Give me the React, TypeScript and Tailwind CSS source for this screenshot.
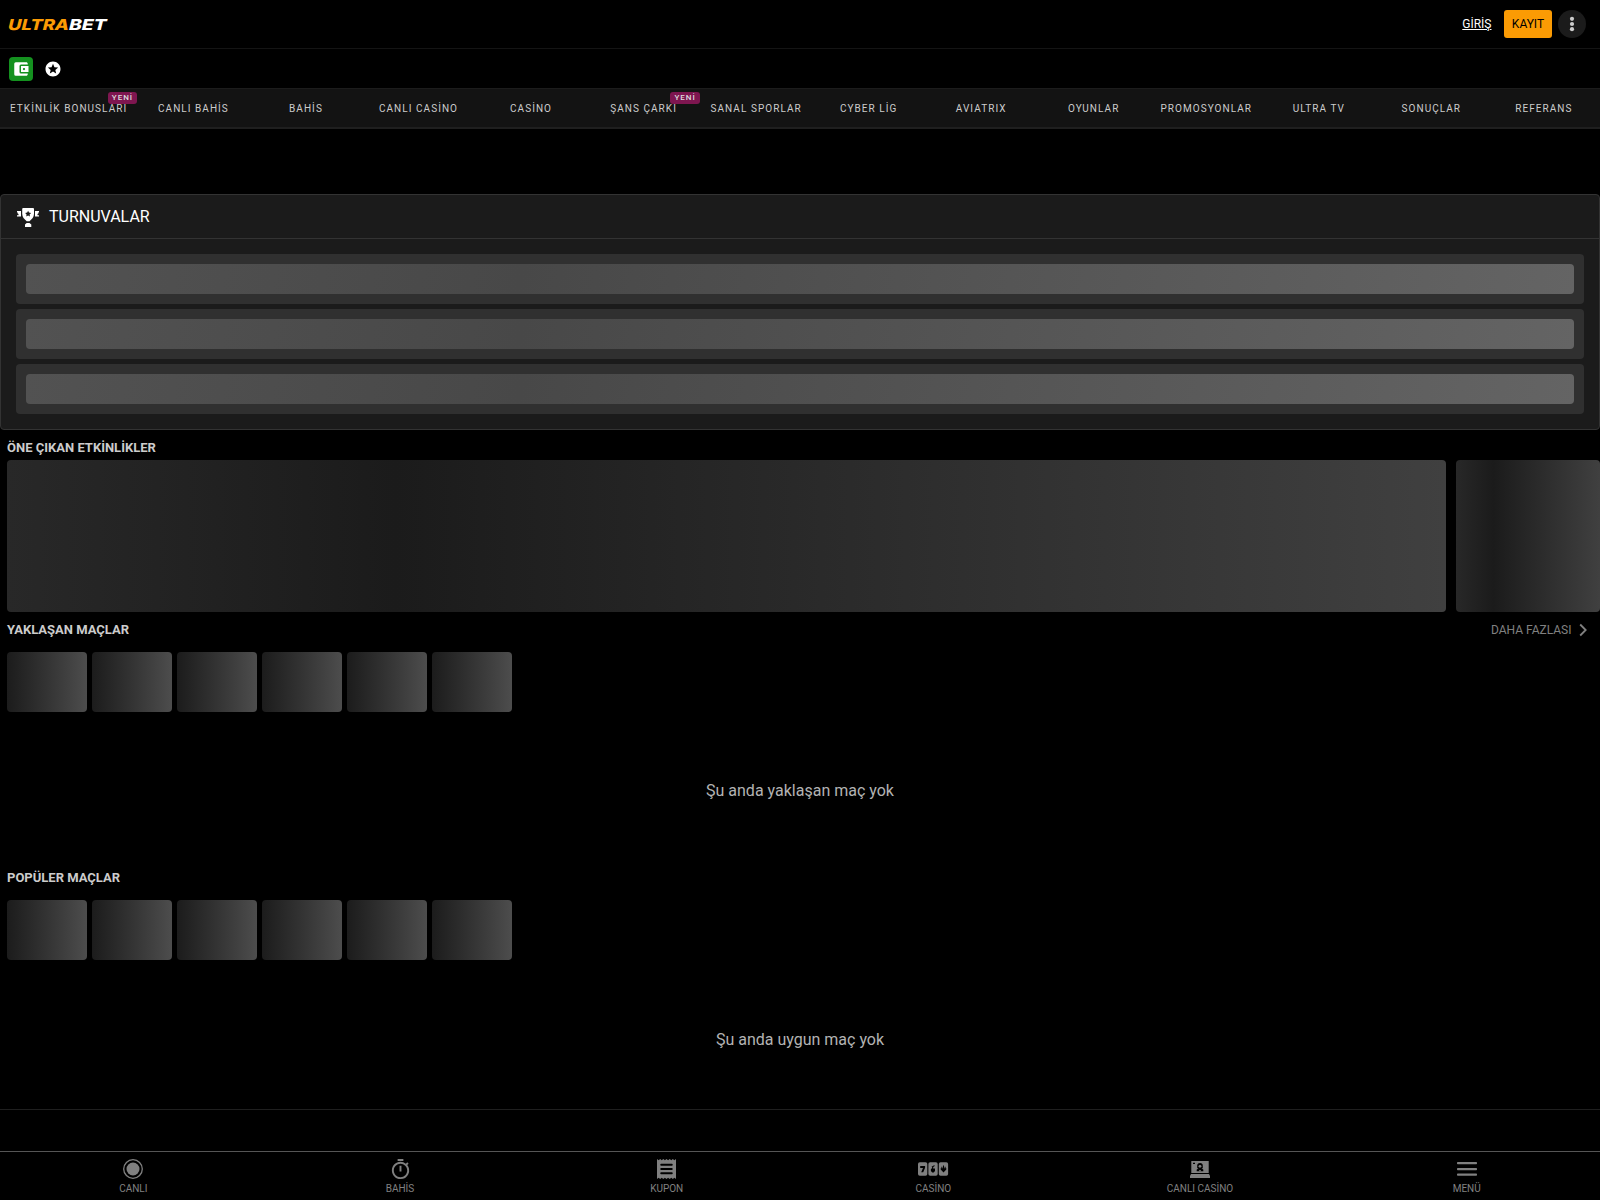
import React from 'react';
import { MdStars, MdOutlineTimer, MdAccountBalanceWallet } from 'react-icons/md';

interface NavItem {
  label: string;
  isNew?: boolean;
}

const navItems: NavItem[] = [
  { label: 'ETKİNLİK BONUSLARI', isNew: true },
  { label: 'CANLI BAHİS' },
  { label: 'BAHİS' },
  { label: 'CANLI CASİNO' },
  { label: 'CASİNO' },
  { label: 'ŞANS ÇARKI', isNew: true },
  { label: 'SANAL SPORLAR' },
  { label: 'CYBER LİG' },
  { label: 'AVIATRIX' },
  { label: 'OYUNLAR' },
  { label: 'PROMOSYONLAR' },
  { label: 'ULTRA TV' },
  { label: 'SONUÇLAR' },
  { label: 'REFERANS' },
];

const Logo: React.FC = () => (
  <svg width="104" height="20" viewBox="-2 -2 104 20" className="-ml-0.5" fontFamily="Inter, sans-serif" fontWeight="800" fontSize="15" aria-label="Ultrabet">
    <g transform="translate(-1 13.500) skewX(-14)">
      <text x="0" y="0" fill="#fb9b04" textLength="61" lengthAdjust="spacingAndGlyphs">ULTRA</text>
      <text x="61" y="0" fill="#fff" textLength="37.500" lengthAdjust="spacingAndGlyphs">BET</text>
    </g>
  </svg>
);

const DotsIcon: React.FC = () => (
  <svg width="6" height="16" viewBox="0 0 6 16" fill="currentColor">
    <circle cx="3" cy="2.8" r="2.1" />
    <circle cx="3" cy="8" r="2.1" />
    <circle cx="3" cy="13.2" r="2.1" />
  </svg>
);

const TrophyIcon: React.FC = () => (
  <svg width="22" height="20" viewBox="0 0 22 20" fill="#fff">
    <path d="M5.200 1.600 6.200 1h9.800l1 .6v5c0 3.600-2 5.600-4.500 7.600h-2.800C7.200 12.200 5.200 10.200 5.200 6.600z" />
    <path d="M0 4h4v5.500H0V8.200h1.500V7L.5 6.300V5.200H0zM22 4h-4v5.500h4V8.200h-1.500V7l1-.7V5.200h.5z" />
    <path d="M9.700 16h2.800l1.800 1.600V20H8v-2.400z" />
    <path fill="#1b1b1b" d="m11.100 3.700.9 1.900 2.100.3-1.500 1.500.4 2.100-1.900-1-1.900 1 .4-2.100-1.500-1.500 2.100-.3z" />
  </svg>
);

const LiveIcon: React.FC = () => (
  <svg width="20" height="20" viewBox="0 0 20 20">
    <circle cx="10" cy="10" r="9.300" fill="none" stroke="currentColor" strokeWidth="1.300" />
    <circle cx="10" cy="10" r="6.500" fill="currentColor" />
  </svg>
);

const CouponIcon: React.FC = () => (
  <svg width="19" height="20" viewBox="0 0 19 20">
    <path
      fill="currentColor"
      d="M0 0l1.600 1.200L3.200 0l1.500 1.200L6.300 0l1.600 1.200L9.500 0l1.600 1.200L12.700 0l1.600 1.200L15.800 0l1.600 1.200L19 0v20l-1.600-1.200-1.600 1.200-1.500-1.200-1.600 1.200-1.600-1.200L9.500 20l-1.600-1.200L6.300 20l-1.600-1.200L3.200 20l-1.600-1.200L0 20z"
    />
    <path stroke="#000" strokeWidth="1.900" strokeLinecap="round" d="M4.200 5.700h10.600M4.200 10h10.600M4.200 14.200h10.600" />
  </svg>
);

const SlotsIcon: React.FC = () => (
  <svg width="32" height="14" viewBox="0 0 32 14" fill="currentColor">
    <rect x="1" y=".3" width="9.300" height="13.400" rx="1.800" />
    <rect x="11.400" y=".3" width="9.300" height="13.400" rx="1.800" />
    <rect x="21.800" y=".3" width="9.300" height="13.400" rx="1.800" />
    <g fill="#000">
      <path d="M3.200 4h4.900v1.700L6.200 10.300H4.200L6 5.900H3.200z" />
      <path d="M14.500 4.700 17.500 3v1.300l-1.300.7v1.500h1.800v2.600L16.700 10.500h-1.500L13.900 9V6.900l1.200-.6V5.200z" />
      <path d="M23.700 6.300h5.600v1.200L26.500 10.500l-2.800-3zM24.400 4.800h1v2h-1zM27.600 4.800h1v2h-1zM26 3.600h1V7h-1z" />
    </g>
  </svg>
);

const DealerIcon: React.FC = () => (
  <svg width="20" height="17" viewBox="0 0 20 17" fill="currentColor">
    <path d="M1.300 0h17.400v12H1.300zM1 13h18l1 2v2H0v-2z" />
    <g fill="#000">
      <path d="M3 1.700h2v1.200H3zM6.700 10.300V8.600l1.800-1.200h3l1.800 1.200v1.700z" />
      <path d="M10 2a2.800 2.800 0 0 0-2.800 2.800V7l1.300 1h3l1.300-1V4.800A2.800 2.800 0 0 0 10 2z" />
    </g>
    <circle cx="10" cy="5.300" r="1.400" />
    <path d="M9 9.200h2v1H9z" />
  </svg>
);

const MenuIcon: React.FC = () => (
  <svg width="20" height="14" viewBox="0 0 20 14" fill="currentColor">
    <rect y="0" width="20" height="2.200" rx=".8" />
    <rect y="6" width="20" height="2.200" rx=".8" />
    <rect y="11.500" width="20" height="2.200" rx=".8" />
  </svg>
);

const bottomItems = [
  { label: 'CANLI', icon: <LiveIcon /> },
  { label: 'BAHİS', icon: <MdOutlineTimer size={23} /> },
  { label: 'KUPON', icon: <CouponIcon /> },
  { label: 'CASİNO', icon: <SlotsIcon /> },
  { label: 'CANLI CASİNO', icon: <DealerIcon /> },
  { label: 'MENÜ', icon: <MenuIcon /> },
];

interface MatchSectionProps {
  title: string;
  message: string;
  more?: boolean;
}

const MatchSection: React.FC<MatchSectionProps> = ({ title, message, more }) => (
  <section className="shrink-0">
    <div className="flex h-10 items-start justify-between pl-[7px] pr-3 pt-2">
      <h2 className="text-[13px] font-bold leading-5 text-[#ccc]">{title}</h2>
      {more && (
        <a className="flex items-center gap-[7.5px] text-xs leading-5 text-[#808080]">
          DAHA FAZLASI
          <svg width="9" height="14" viewBox="0 0 9 14" fill="none" stroke="currentColor" strokeWidth="1.800">
            <path d="m1.200 1.500 5.500 5.500-5.500 5.500" />
          </svg>
        </a>
      )}
    </div>
    <div className="flex gap-[5px] pl-[7px]">
      {Array.from({ length: 6 }).map((_, i) => (
        <div key={i} className="h-[60px] w-20 rounded bg-linear-to-r from-[#1c1c1c] to-[#4d4d4d]" />
      ))}
    </div>
    <p className="flex h-[148.4px] items-center justify-center pt-2.5 text-base text-[#b3b3b3]">{message}</p>
  </section>
);

export default function App() {
  return (
    <div className="flex h-[1200px] flex-col overflow-hidden bg-black font-[Roboto,sans-serif]">
      <header className="flex h-[49px] shrink-0 items-center justify-between border-b border-[#141414] pl-2 pr-3.5">
        <Logo />
        <div className="flex items-center">
          <a className="mr-[12.5px] text-xs text-white underline">GİRİŞ</a>
          <button className="mr-1.5 h-7 w-12 rounded-[3px] bg-[#fb9b04] text-xs text-black">KAYIT</button>
          <button className="flex size-7 items-center justify-center rounded-full bg-[#1b1b1b] text-[#ccc]">
            <DotsIcon />
          </button>
        </div>
      </header>

      <div className="flex h-[39px] shrink-0 items-center gap-[11px] pl-[9px]">
        <div className="flex size-6 items-center justify-center rounded bg-[#14911f] text-white">
          <MdAccountBalanceWallet size={18} />
        </div>
        <MdStars size={18} className="text-white" />
      </div>

      <nav className="flex h-[41px] shrink-0 border-t border-b-2 border-t-[#1c1c1c] border-b-[#1f1f1f] bg-[#131313]">
        {navItems.map(item => (
          <a key={item.label} className="relative flex flex-1 items-center justify-center px-2.5 text-[10px] tracking-[1.05px] whitespace-nowrap text-[#ccc]">
            {item.label}
            {item.isNew && (
              <span className="absolute top-[3px] right-0 flex h-3 w-[29.500px] items-center justify-center rounded-[3px] bg-[#7e1650] text-[8px] font-medium tracking-[1px] text-[#ddd]">
                YENİ
              </span>
            )}
          </a>
        ))}
      </nav>

      <section className="mt-[65px] h-[236px] shrink-0 rounded border border-[#333] bg-[#1b1b1b]">
        <div className="flex h-11 items-center gap-2.5 border-b border-[#333] pl-4">
          <TrophyIcon />
          <h2 className="text-base text-white">TURNUVALAR</h2>
        </div>
        <div className="flex flex-col gap-[5px] p-[15px]">
          {[0, 1, 2].map(i => (
            <div key={i} className="rounded bg-[#303030] p-2.5">
              <div className="h-[30px] rounded bg-[linear-gradient(100deg,#525252_0%,#484848_32%,#646464_100%)]" />
            </div>
          ))}
        </div>
      </section>

      <section className="h-[182px] shrink-0">
        <h2 className="h-[30px] pl-[7px] pt-1.5 text-[13px] font-bold leading-[23px] text-[#ccc]">ÖNE ÇIKAN ETKİNLİKLER</h2>
        <div className="flex gap-2.5 pl-[7px]">
          <div className="h-[152px] w-[1439px] rounded bg-[linear-gradient(90deg,#282828_0%,#1b1b1b_27%,#404040_100%)]" />
          <div className="h-[152px] flex-1 rounded bg-[linear-gradient(90deg,#282828_0%,#1b1b1b_26%,#404040_100%)]" />
        </div>
      </section>

      <MatchSection title="YAKLAŞAN MAÇLAR" message="Şu anda yaklaşan maç yok" more />
      <MatchSection title="POPÜLER MAÇLAR" message="Şu anda uygun maç yok" />

      <div className="flex-1 border-t border-[#1f1f1f]" />

      <footer className="flex h-[49px] shrink-0 border-t border-[#555] text-[#808080]">
        {bottomItems.map(item => (
          <a key={item.label} className="flex flex-1 flex-col items-center pt-1.5">
            <span className="flex h-[22px] items-center">{item.icon}</span>
            <span className="mt-[3px] text-[10px] leading-3">{item.label}</span>
          </a>
        ))}
      </footer>
    </div>
  );
}
